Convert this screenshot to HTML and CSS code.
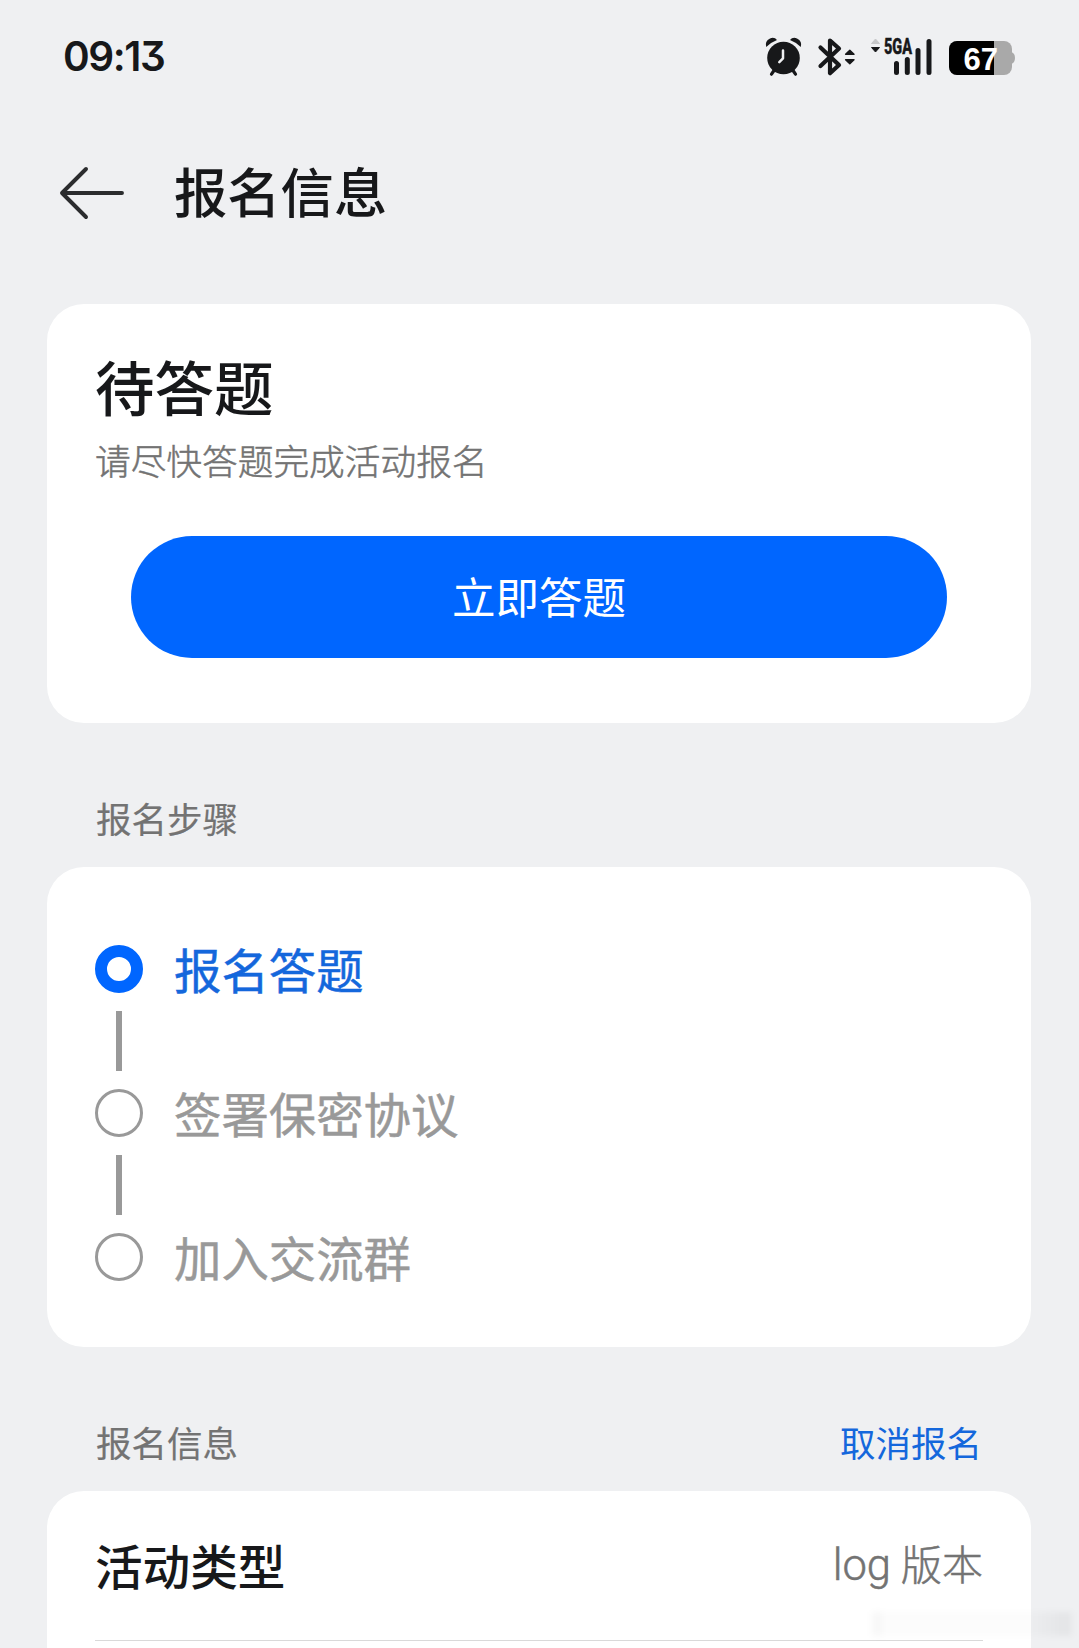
FILE: index.html
```html
<!DOCTYPE html>
<html lang="zh-CN">
<head>
<meta charset="utf-8">
<title>报名信息</title>
<link rel="stylesheet" href="styles.css">
</head>
<body>
<div class="screen">
  <header class="status">
    <span class="clock">09:13</span>
    <div class="indicators">
      <svg class="ic-alarm" width="38" height="40" viewBox="0 0 38 40">
        <circle cx="18.500" cy="21" r="16.300" fill="#17181a"/>
        <path d="M1.200 10Q-.5 4 5 1.400Q9.500 -.3 12 3Q5.500 5.500 1.200 10ZM35.800 10Q37.500 4 32 1.400Q27.500 -.3 25 3Q31.500 5.500 35.800 10Z" fill="#17181a"/>
        <path d="M9 33.500L6.500 37.200M28 33.500L30.500 37.200" stroke="#17181a" stroke-width="3.200" stroke-linecap="round"/>
        <path d="M18 13.500V21.300L14.300 25.100" fill="none" stroke="#eff0f2" stroke-width="2.500" stroke-linecap="round" stroke-linejoin="round"/>
      </svg>
      <svg class="ic-bt" width="37" height="40" viewBox="0 0 37 40">
        <path d="M2.500 10.500L21 28L12 36.200V3.500L21 11.500L2.500 29" fill="none" stroke="#17181a" stroke-width="4.200" stroke-linecap="round" stroke-linejoin="round"/>
        <path d="M27.600 17.300L31.800 13.200L36 17.300ZM27.600 22.700L31.800 26.800L36 22.700Z" fill="#17181a" stroke="#17181a" stroke-width="1.400" stroke-linejoin="round"/>
      </svg>
      <svg class="ic-net" width="62" height="40" viewBox="0 0 62 40">
        <path d="M1.500 6.500L5.500 2L9.500 6.500Z" fill="#c6c7c9" stroke="#c6c7c9" stroke-linejoin="round"/>
        <path d="M1.500 10.500L5.500 15L9.500 10.500Z" fill="#17181a" stroke="#17181a" stroke-linejoin="round"/>
        <text class="net-label" x="14" y="17" textLength="28" lengthAdjust="spacingAndGlyphs">5GA</text>
        <path d="M26.500 26.500V35.500M37.300 22.500V35.500M48 13.500V35.500M59 4.500V35.500" stroke="#17181a" stroke-width="5" stroke-linecap="round"/>
      </svg>
      <svg class="ic-battery" width="67" height="35" viewBox="0 0 67 35">
        <defs><clipPath id="cell"><rect width="63" height="34" rx="8"/></clipPath></defs>
        <path d="M62 11Q66 12 66 17Q66 22 62 23Z" fill="#a9a9a9"/>
        <g clip-path="url(#cell)"><rect width="63" height="34" fill="#a9a9a9"/><rect width="45" height="34"/></g>
        <text class="level" x="14.500" y="28.500" textLength="34.500" lengthAdjust="spacingAndGlyphs">67</text>
      </svg>
    </div>
  </header>

  <nav class="topbar">
    <svg width="66" height="54" viewBox="0 0 66 54">
      <path d="M63 27H4M27 3L3 27L27 51" fill="none" stroke="#2b2c2e" stroke-width="3.900" stroke-linecap="round" stroke-linejoin="round"/>
    </svg>
    <h1>报名信息</h1>
  </nav>

  <main>
    <section class="card pending">
      <h2>待答题</h2>
      <p>请尽快答题完成活动报名</p>
      <button type="button">立即答题</button>
    </section>

    <div class="section-head steps-head"><span>报名步骤</span></div>
    <section class="card steps">
      <div class="step current"><i class="dot"></i><span>报名答题</span></div>
      <i class="line"></i>
      <div class="step"><i class="dot"></i><span>签署保密协议</span></div>
      <i class="line"></i>
      <div class="step"><i class="dot"></i><span>加入交流群</span></div>
    </section>

    <div class="section-head info-head"><span>报名信息</span><a>取消报名</a></div>
    <section class="card info">
      <div class="row"><span class="key">活动类型</span><span class="value"><span class="latin">log</span> 版本</span></div>
    </section>
  </main>
  <div class="haze"></div>
</div>
</body>
</html>
```
FILE: styles.css
```css
* { box-sizing: border-box; }
body {
  margin: 0;
  background: #eff0f2;
  font-family: "Noto Sans CJK SC", sans-serif;
  color: #17181a;
}
.screen {
  position: relative;
  height: 1648px;
  overflow: hidden;
}
h1, h2, p { margin: 0; font-weight: 500; }
svg { display: block; flex: none; overflow: visible; }

.status {
  display: flex;
  justify-content: space-between;
  height: 114px;
  padding: 0 63px 0 63px;
}
.clock {
  font: 600 40.500px/113px Inter, sans-serif;
  font-feature-settings: "cv09";
  letter-spacing: -1.400px;
}
.indicators { display: flex; padding-top: 37px; }
.ic-bt { margin-left: 15px; }
.ic-net { margin-left: 15px; }
.ic-battery { margin: 4px 0 0 17px; }
.net-label { font: 800 22px "Roboto", sans-serif; fill: #17181a; stroke: #17181a; stroke-width: .5px; }
.level { font: 700 32px "Liberation Sans", sans-serif; fill: #fff; }

.topbar {
  display: flex;
  align-items: center;
  height: 158px;
  padding: 0 0 0 59px;
  gap: 49px;
}
.topbar h1 { font-size: 53.300px; line-height: 80px; padding-bottom: 7px; }

.card {
  margin: 0 48px 0 47px;
  border-radius: 37px;
  background: #fff;
}
main { padding-top: 32px; }
.pending { height: 419px; padding: 37px 84px 0 48px; }
.pending h2 { font-size: 59.500px; line-height: 88px; }
.pending p {
  font-size: 35.700px;
  font-weight: 300;
  line-height: 54px;
  margin-top: 4px;
  color: #737373;
  -webkit-text-stroke: .5px #737373;
}
.pending button {
  display: block;
  width: 816px;
  height: 122px;
  margin: 49px 0 0 36px;
  padding: 0 0 3px;
  border: 0;
  border-radius: 61px;
  background: #0066ff;
  color: #fff;
  font: 400 43.500px/119px "Noto Sans CJK SC", sans-serif;
}

.section-head {
  display: flex;
  justify-content: space-between;
  height: 144px;
  padding: 68px 97px 0 96px;
  font-size: 35.500px;
  line-height: 54px;
  color: #737373;
}
.section-head span { -webkit-text-stroke: .2px #737373; }
.section-head a { color: #1467dc; }

.steps { height: 480px; padding: 78px 48px 0; }
.step {
  display: flex;
  align-items: center;
  gap: 31px;
  height: 48px;
  font-size: 47.400px;
  color: #999;
}
.step span { padding-bottom: 2px; -webkit-text-stroke: .5px currentColor; }
.dot {
  width: 48px;
  height: 48px;
  border: 3px solid #999;
  border-radius: 50%;
}
.current { color: #1467dc; }
.current .dot { border: 12px solid #0066ff; }
.line {
  display: block;
  width: 6px;
  height: 60px;
  margin: 18px 21px;
  background: #999;
}

.info { height: 200px; padding: 0 48px; }
.row {
  display: flex;
  justify-content: space-between;
  align-items: center;
  height: 150px;
  border-bottom: 1px solid #d9d9d9;
}
.key { font-size: 47.600px; font-weight: 500; padding-bottom: 3px; }
.value {
  font-family: Roboto, "Noto Sans CJK SC", sans-serif;
  font-size: 41px;
  font-weight: 300;
  padding-bottom: 8px;
  color: #737373;
  -webkit-text-stroke: .5px #737373;
}
.latin { font-size: 43.500px; }

.haze {
  position: absolute;
  left: 868px;
  top: 1612px;
  width: 204px;
  height: 24px;
  background: linear-gradient(90deg, #0000, #00000009 5%, #00000003 8%, #00000003 80%, #0000000c 99%, #0000);
  filter: blur(3px);
}
```
